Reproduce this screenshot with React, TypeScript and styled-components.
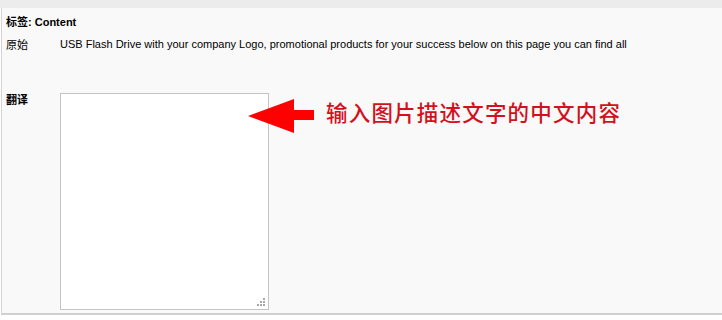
import React from 'react'
import styled, { createGlobalStyle } from 'styled-components'

const GlobalStyle = createGlobalStyle`
  html, body {
    margin: 0;
    padding: 0;
    background: #ffffff;
  }
  body {
    font-family: "Liberation Sans", Arial, "Noto Sans CJK SC", sans-serif;
    font-size: 11px;
    color: #000;
  }
`

const Page = styled.div`
  width: 722px;
  height: 320px;
  overflow: hidden;
`

const TopBar = styled.div`
  height: 8px;
  background: #ececec;
`

const Panel = styled.div`
  height: 297px;
  margin-left: 1px;
  border-left: 1px solid #d4d4d4;
  border-bottom: 2px solid #d0d0d0;
  background: #f9f9f9;
  padding: 8px 0 0 4px;
  box-sizing: content-box;
`

const Title = styled.div`
  font-weight: bold;
  font-size: 11px;
  line-height: 13px;
  height: 13px;
  margin-bottom: 9px;
`

const Row = styled.div<{ $gap?: number }>`
  display: grid;
  grid-template-columns: 54px 1fr;
  align-items: start;
  margin-bottom: ${p => p.$gap ?? 0}px;
`

const Label = styled.div<{ $bold?: boolean }>`
  font-family: "Noto Sans CJK SC", "Liberation Sans", sans-serif;
  font-size: 11px;
  line-height: 13px;
  font-weight: ${p => (p.$bold ? 700 : 400)};
`

const Source = styled.div`
  font-size: 11px;
  line-height: 13px;
  white-space: nowrap;
`

const EditArea = styled.div`
  display: flex;
  align-items: flex-start;
`

const BoxWrap = styled.div`
  position: relative;
  width: 209px;
  height: 217px;
`

const TextBox = styled.textarea`
  width: 100%;
  height: 100%;
  box-sizing: border-box;
  border: 1px solid #c4c4c4;
  background: #ffffff;
  resize: none;
  margin: 0;
  padding: 2px;
  outline: none;
`

const Grip = styled.svg`
  position: absolute;
  right: 4px;
  bottom: 4px;
`

const Hint = styled.div`
  position: relative;
  z-index: 1;
  display: flex;
  align-items: flex-start;
  gap: 12px;
  margin-left: -21px;
  margin-top: 6px;
`

const HintText = styled.span`
  font-family: "Noto Sans CJK SC", sans-serif;
  font-size: 21.5px;
  font-weight: 500;
  line-height: 30px;
  color: #d4101c;
  letter-spacing: 1.2px;
  margin-top: -2px;
`

const Arrow = () => (
  <svg width="66" height="34" viewBox="0 0 66 34">
    <polygon points="0,17 46,0 46,11 66,11 66,21 46,21 46,34" fill="#ff0000" />
  </svg>
)

const App: React.FC = () => (
  <Page>
    <GlobalStyle />
    <TopBar />
    <Panel>
      <Title>标签: Content</Title>
      <Row $gap={42}>
        <Label>原始</Label>
        <Source>
          USB Flash Drive with your company Logo, promotional products for your success below on this page you can find all
        </Source>
      </Row>
      <Row>
        <Label $bold>翻译</Label>
        <EditArea>
          <BoxWrap>
            <TextBox />
            <Grip width="9" height="9" viewBox="0 0 9 9">
              <rect x="7" y="1" width="2" height="2" fill="#a8a8a8" />
              <rect x="4" y="4" width="2" height="2" fill="#a8a8a8" />
              <rect x="7" y="4" width="2" height="2" fill="#a8a8a8" />
              <rect x="1" y="7" width="2" height="2" fill="#a8a8a8" />
              <rect x="4" y="7" width="2" height="2" fill="#a8a8a8" />
              <rect x="7" y="7" width="2" height="2" fill="#a8a8a8" />
            </Grip>
          </BoxWrap>
          <Hint>
            <Arrow />
            <HintText>输入图片描述文字的中文内容</HintText>
          </Hint>
        </EditArea>
      </Row>
    </Panel>
  </Page>
)

export default App
